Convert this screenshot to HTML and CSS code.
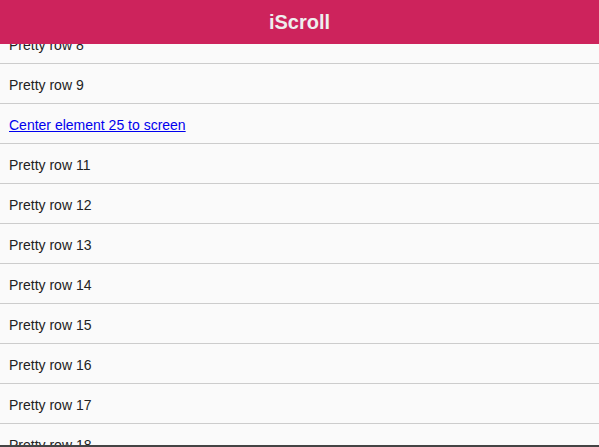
FILE: index.html
```html
<!DOCTYPE html>
<html>
<head>
<meta charset="utf-8">
<title>iScroll</title>
<link rel="stylesheet" href="styles.css">
</head>
<body>
<div class="app">
  <div class="header">iScroll</div>
  <div class="wrapper">
    <ul class="scroller">
      <li>Pretty row 8</li>
      <li>Pretty row 9</li>
      <li><a href="#">Center element 25 to screen</a></li>
      <li>Pretty row 11</li>
      <li>Pretty row 12</li>
      <li>Pretty row 13</li>
      <li>Pretty row 14</li>
      <li>Pretty row 15</li>
      <li>Pretty row 16</li>
      <li>Pretty row 17</li>
      <li>Pretty row 18</li>
      <li>Pretty row 19</li>
    </ul>
  </div>
  <div class="footer"></div>
</div>
</body>
</html>
```
FILE: styles.css
```css
html, body {
  margin: 0;
  padding: 0;
  height: 100%;
}
body {
  font-family: "Liberation Sans", Arial, sans-serif;
  background: #ccc;
}
.app {
  display: flex;
  flex-direction: column;
  height: 100%;
}
.header {
  height: 44px;
  line-height: 44px;
  flex: none;
  background: #cd235c;
  color: #eee;
  font-size: 20px;
  font-weight: bold;
  text-align: center;
  position: relative;
  z-index: 2;
}
.wrapper {
  flex: 1;
  overflow: hidden;
  background: #ccc;
}
.scroller {
  list-style: none;
  margin: 0;
  padding: 0;
  transform: translateY(-20px);
}
.scroller li {
  padding: 2px 10px 0 9px;
  height: 37px;
  line-height: 39px;
  border-bottom: 1px solid #ccc;
  background: #fafafa;
  font-size: 14px;
  color: #222;
}
.scroller a {
  color: #0000ee;
  text-decoration: underline;
}
.footer {
  flex: none;
  height: 2px;
  background: #444;
}
```
